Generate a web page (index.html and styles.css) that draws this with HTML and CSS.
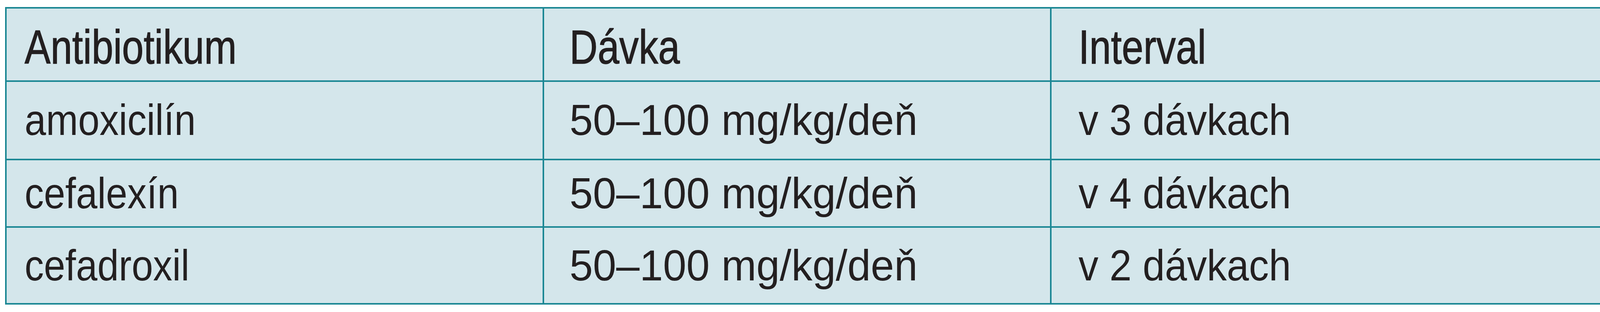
FILE: index.html
```html
<!DOCTYPE html>
<html lang="sk">
<head>
<meta charset="utf-8">
<title>Antibiotiká</title>
<link rel="stylesheet" href="styles.css">
</head>
<body>
<div class="dose-table" role="table">
  <div class="cell head c1" role="columnheader"><span class="txt">Antibiotikum</span></div>
  <div class="cell head c2" role="columnheader"><span class="txt">Dávka</span></div>
  <div class="cell head c3" role="columnheader"><span class="txt">Interval</span></div>

  <div class="cell body r1 c1" role="cell"><span class="txt">amoxicilín</span></div>
  <div class="cell body r1 c2" role="cell"><span class="txt">50–100 mg/kg/deň</span></div>
  <div class="cell body r1 c3" role="cell"><span class="txt">v 3 dávkach</span></div>

  <div class="cell body r2 c1" role="cell"><span class="txt">cefalexín</span></div>
  <div class="cell body r2 c2" role="cell"><span class="txt">50–100 mg/kg/deň</span></div>
  <div class="cell body r2 c3" role="cell"><span class="txt">v 4 dávkach</span></div>

  <div class="cell body r3 c1" role="cell"><span class="txt">cefadroxil</span></div>
  <div class="cell body r3 c2" role="cell"><span class="txt">50–100 mg/kg/deň</span></div>
  <div class="cell body r3 c3" role="cell"><span class="txt">v 2 dávkach</span></div>
</div>
</body>
</html>
```

FILE: styles.css
```css
html, body {
  margin: 0;
  padding: 0;
  background: #ffffff;
}

.dose-table {
  margin: 18px 0 0 13px;
  width: 4092px;
  box-sizing: border-box;
  display: grid;
  grid-template-columns: 1372px 1295px 1409px;
  grid-template-rows: 184px 197px 169px 193px;
  gap: 4px;
  padding: 4px;
  background: #1b8794;
}

.cell {
  background: #d4e6eb;
  color: #231f20;
  box-sizing: border-box;
  white-space: nowrap;
  overflow: hidden;
  font-family: "Liberation Sans", Arial, sans-serif;
  font-weight: 400;
}

.txt {
  display: inline-block;
  transform-origin: 0 50%;
}

/* header row: slightly heavier condensed grotesque */
.head {
  font-size: 123px;
  line-height: 123px;
  padding-top: 37px;
  -webkit-text-stroke: 1.5px #231f20;
}
.head .txt { transform: scaleX(0.81); }

/* body rows */
.body {
  font-size: 112px;
  line-height: 112px;
}
.body.c1 .txt { transform: scaleX(0.88); }
.body.c2 .txt { transform: scaleX(0.96); }
.body.c3 .txt { transform: scaleX(0.91); }

.r1 { padding-top: 42px; }
.r2 { padding-top: 29px; }
.r3 { padding-top: 41px; }

.c1 { padding-left: 46px; }
.c2 { padding-left: 65px; }
.c3 { padding-left: 69px; }
```
